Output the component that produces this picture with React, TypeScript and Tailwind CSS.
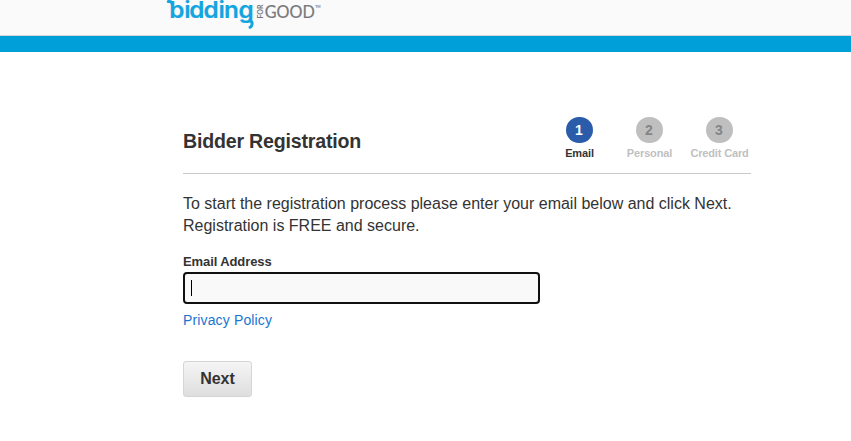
import React from "react";

const steps = [
  { id: 1, label: "Email", active: true },
  { id: 2, label: "Personal", active: false },
  { id: 3, label: "Credit Card", active: false },
];

function Logo() {
  return (
    <svg width="160" height="35" viewBox="0 0 160 35" overflow="visible" className="block">
      <text
        x="2.9 16.8 21.5 34.7 48.7 53.7 67.1"
        y="18"
        transform="scale(1.08 1)"
        fill="#12a5df"
        stroke="#12a5df"
        strokeWidth="0.2"
        fontFamily="Inter, sans-serif"
        fontWeight="600"
        fontSize="22.5"
      >
        bidding
      </text>
      {/* swashes on the first and last letters */}
      <g fill="none" stroke="#12a5df" strokeWidth="3" strokeLinecap="round">
        <path d="M2.3 1.5C4.3 1.3 6 1.8 6.2 4" />
        <path d="M84.2 20.6C87 22 86.6 26 84 27.3" />
      </g>
      <text
        transform="translate(97.2 18.5) rotate(-90)"
        fill="#77787b"
        fontFamily="Lato, sans-serif"
        fontWeight="700"
        fontSize="7"
        textLength="14"
      >
        FOR
      </text>
      <text
        x="98.7"
        y="18"
        fill="#77787b"
        stroke="#77787b"
        strokeWidth="0.2"
        fontFamily="Lato, sans-serif"
        fontSize="17.5"
        textLength="50"
        lengthAdjust="spacingAndGlyphs"
      >
        GOOD
      </text>
      <text x="149.2" y="8" fill="#77787b" fontFamily="Lato, sans-serif" fontWeight="700" fontSize="3.5">
        TM
      </text>
    </svg>
  );
}

function Steps() {
  return (
    <ol className="-mr-[3px] flex">
      {steps.map((step) => (
        <li key={step.id} className="flex w-[70px] flex-col items-center">
          <span
            className={
              step.active
                ? "flex h-[26px] w-[27px] items-center justify-center rounded-full bg-[#2a5caa] text-[14px] font-bold text-white"
                : "flex h-[26px] w-[27px] items-center justify-center rounded-full bg-[#bfbfbf] text-[14px] font-bold text-[#858585]"
            }
          >
            {step.id}
          </span>
          <span
            className={
              step.active
                ? "mt-[3px] pl-px text-[11px] leading-[14px] font-bold tracking-[-0.15px] whitespace-nowrap text-[#333]"
                : "mt-[3px] pl-px text-[11px] leading-[14px] font-bold tracking-[-0.15px] whitespace-nowrap text-[#bfbfbf]"
            }
          >
            {step.label}
          </span>
        </li>
      ))}
    </ol>
  );
}

export default function App() {
  return (
    <div className="min-h-screen bg-white font-['Liberation_Sans',Arial,sans-serif] text-[#333]">
      <header className="h-[52px] border-b-16 border-[#009fda] bg-[#fafafa]">
        <div className="h-9 border-b border-[#d5d5d5] pl-[166px]">
          <Logo />
        </div>
      </header>

      <main className="ml-[183px] w-[568px] pt-[65px]">
        <div className="flex h-[57px] justify-between border-b border-[#c8c8c8]">
          <h1 className="pt-3 text-[19.6px] leading-6 font-bold tracking-[-0.2px]">Bidder Registration</h1>
          <Steps />
        </div>

        <p className="mt-[19px] text-[16px] leading-[22px]">
          To start the registration process please enter your email below and click Next.
          <br />
          Registration is FREE and secure.
        </p>

        <form onSubmit={(e) => e.preventDefault()}>
          <label htmlFor="email" className="mt-[17px] block text-[13px] leading-4 font-bold tracking-[-0.1px]">
            Email Address
          </label>
          <div className="relative mt-[2px] h-8 w-[357px]">
            <input
              id="email"
              type="email"
              className="block h-full w-full rounded-[4px] border-2 border-[#101010] bg-[#f9f9f9] px-2 outline-none"
            />
            <span className="absolute top-2 left-2 h-4 w-px bg-black" />
          </div>
          <a href="#" className="mt-2 block text-[14px] leading-4 tracking-[0.14px] text-[#1a74d2]">
            Privacy Policy
          </a>
          <button
            type="submit"
            className="mt-[33px] block h-9 w-[69px] rounded-[3px] border border-[#d3d5d6] bg-linear-to-b from-[#f5f5f5] to-[#dedede] text-[16px] font-bold"
          >
            Next
          </button>
        </form>
      </main>
    </div>
  );
}
